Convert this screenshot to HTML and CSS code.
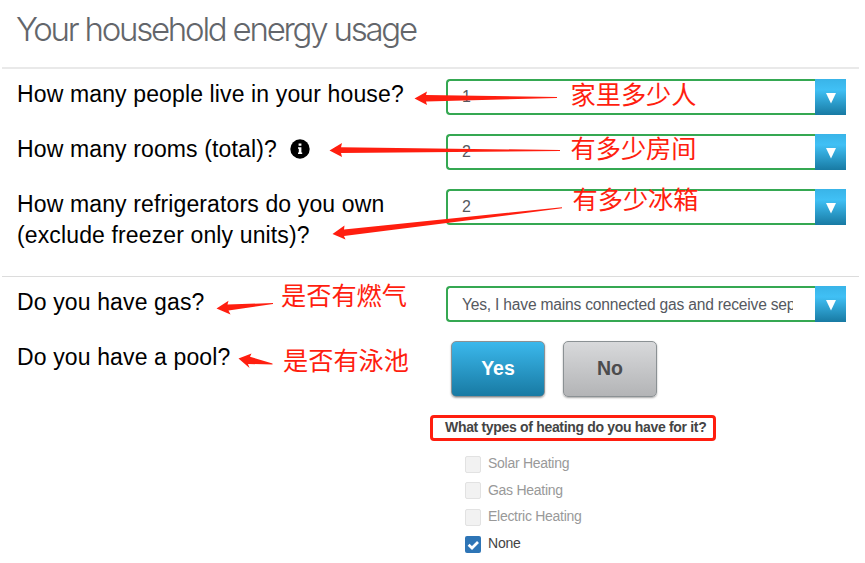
FILE: index.html
```html
<!DOCTYPE html>
<html lang="en">
<head>
<meta charset="utf-8">
<title>Your household energy usage</title>
<link rel="stylesheet" href="styles.css">
</head>
<body>
<main class="page">
  <h1 class="title"><span>Your household energy usage</span></h1>
  <section class="group group-usage">
    <div class="row">
      <div class="question"><span>How many people live in your house?</span></div>
      <div class="select"><span class="value">1</span><span class="arrow"><svg width="10" height="11" viewBox="0 0 10 11"><path d="M0 0H10L5 10.5Z" fill="#fff"/></svg></span></div>
    </div>
    <div class="row">
      <div class="question"><span>How many rooms (total)?</span>
        <svg class="info" width="20" height="20" viewBox="0 0 20 20"><circle cx="10" cy="10" r="9.7" fill="#000"/><path d="M8.600 4.600h2.800v2.200h-2.800zM8 8.300h3.400v5.300h.8v1.400H8v-1.400h.8V9.700H8z" fill="#fff"/></svg>
      </div>
      <div class="select"><span class="value">2</span><span class="arrow"><svg width="10" height="11" viewBox="0 0 10 11"><path d="M0 0H10L5 10.5Z" fill="#fff"/></svg></span></div>
    </div>
    <div class="row">
      <div class="question"><span>How many refrigerators do you own<br>(exclude freezer only units)?</span></div>
      <div class="select"><span class="value">2</span><span class="arrow"><svg width="10" height="11" viewBox="0 0 10 11"><path d="M0 0H10L5 10.5Z" fill="#fff"/></svg></span></div>
    </div>
  </section>
  <section class="group group-supply">
    <div class="row">
      <div class="question"><span>Do you have gas?</span></div>
      <div class="select"><span class="value value-long">Yes, I have mains connected gas and receive separate bills</span><span class="arrow"><svg width="10" height="11" viewBox="0 0 10 11"><path d="M0 0H10L5 10.5Z" fill="#fff"/></svg></span></div>
    </div>
    <div class="row">
      <div class="question"><span>Do you have a pool?</span></div>
      <div class="pool">
        <div class="buttons">
          <button class="btn btn-yes">Yes</button>
          <button class="btn btn-no">No</button>
        </div>
        <div class="heating-title"><span>What types of heating do you have for it?</span></div>
        <ul class="options">
          <li class="option"><i class="box"></i><span>Solar Heating</span></li>
          <li class="option"><i class="box"></i><span>Gas Heating</span></li>
          <li class="option"><i class="box"></i><span>Electric Heating</span></li>
          <li class="option checked"><i class="box"><svg width="16" height="16" viewBox="0 0 16 16"><path d="M3.6 8.8L7 12L13 6" fill="none" stroke="#fff" stroke-width="2.7"/></svg></i><span>None</span></li>
        </ul>
      </div>
    </div>
  </section>

  <svg class="marks" width="865" height="563" viewBox="0 0 865 563" fill="#ff1e0f">
    <path d="M414.500 98.500L427 91.500L426 95L557 97L557 98L426 101.500L427 105Z"/>
    <path d="M329.500 150.500L342 143L341 147.300L560 150L560 151L341 153L342 157Z"/>
    <path d="M332.500 234L344.500 225.500L344 229.500L562 207.300L562 208.300L344 236L345.500 239.500Z"/>
    <path d="M216.500 308.500L228.500 300.800L227.500 304.500L273 303L273 304L228.500 310.500L230.500 314.500Z"/>
    <path d="M238.500 358.500L251.500 353.500L250 356.800L272.500 363.500L272.500 364.500L248 364L249.500 368Z"/>
  </svg>
  <span class="note note-people">家里多少人</span>
  <span class="note note-rooms">有多少房间</span>
  <span class="note note-fridges">有多少冰箱</span>
  <span class="note note-gas">是否有燃气</span>
  <span class="note note-pool">是否有泳池</span>
</main>
</body>
</html>
```
FILE: styles.css
```css
* { box-sizing: border-box; }
body {
  margin: 0;
  background: #fff;
  font-family: "Liberation Sans", Arial, sans-serif;
  color: #000;
}
.page {
  position: relative;
  width: 865px;
  height: 563px;
  overflow: hidden;
}
.title {
  margin: 0;
  height: 67px;
  padding: 8px 0 0 16px;
  font: 300 33px/42px Inter, sans-serif;
  letter-spacing: -2.23px;
  color: #63666b;
  white-space: nowrap;
}
.group {
  margin: 0 6px 0 2px;
  padding-left: 15px;
}
.group-usage {
  height: 209px;
  padding-top: 9.5px;
  border-top: 2px solid #e9e9e9;
}
.group-supply {
  padding-top: 9px;
  border-top: 1px solid #dcdcdc;
}
.row {
  display: flex;
  align-items: flex-start;
  min-height: 55px;
}
.question {
  display: flex;
  align-items: center;
  gap: 13px;
  width: 429px;
  flex: none;
  padding-top: 0.5px;
  font-size: 23px;
  line-height: 30.5px;
  letter-spacing: 0.13px;
  white-space: nowrap;
}
.select {
  display: flex;
  width: 400px;
  height: 36px;
  border: 2px solid #35a852;
  border-right: 0;
  border-radius: 4px 0 0 4px;
}
.value {
  flex: 1;
  margin-left: 14px;
  margin-right: 22px;
  overflow: hidden;
  white-space: nowrap;
  font-size: 16px;
  line-height: 31px;
  color: #55595f;
}
.value-long {
  font-size: 15.6px;
  letter-spacing: -0.2px;
  line-height: 33px;
}
.arrow {
  display: flex;
  align-items: center;
  justify-content: center;
  width: 31px;
  margin: -2px 0;
  padding-top: 3px;
  background: linear-gradient(#39b4e8, #40c0f5 30%, #187aa3);
}
.pool { width: 400px; margin-left: -16px; }
.buttons {
  display: flex;
  gap: 18px;
  padding-left: 21px;
}
.btn {
  width: 94px;
  height: 56px;
  padding: 0 0 1px;
  border: 1px solid #8b9194;
  border-radius: 5px;
  font: bold 19.5px "Liberation Sans", Arial, sans-serif;
  box-shadow: 0 1px 2px rgba(0, 0, 0, .35);
}
.btn-yes { color: #fff; background: linear-gradient(#3bb8ec, #187aa3); }
.btn-no { color: #4c4c4e; background: linear-gradient(#d8d9db, #b3b4b6); }
.heating-title {
  width: 286px;
  height: 26px;
  margin-top: 18px;
  padding-left: 12px;
  border: 3px solid #ff1e0f;
  border-radius: 4px;
  font-size: 14px;
  letter-spacing: -0.32px;
  font-weight: bold;
  line-height: 19px;
  color: #444;
  white-space: nowrap;
}
.options {
  margin: 9px 0 0;
  padding: 0 0 0 35px;
  list-style: none;
}
.option {
  display: flex;
  align-items: center;
  gap: 7px;
  height: 26.6px;
  font-size: 14px;
  letter-spacing: -0.28px;
  line-height: 20px;
  color: #999;
}
.box {
  width: 16px;
  height: 17px;
  margin-top: 2px;
  border: 1px solid #e2e2e2;
  border-radius: 2px;
  background: #f2f2f2;
}
.checked { color: #444; letter-spacing: -0.2px; }
.checked .box { border: 0; background: #2e75b6; }
.box svg { display: block; }
.marks {
  position: absolute;
  left: 0;
  top: 0;
}
.note {
  position: absolute;
  font: 25.2px/36px "Noto Sans CJK SC", sans-serif;
  color: #ff1e0f;
  white-space: nowrap;
}
.note-people { left: 570.5px; top: 75px; }
.note-rooms { left: 570.5px; top: 129px; }
.note-fridges { left: 572.5px; top: 180px; }
.note-gas { left: 281px; top: 276px; }
.note-pool { left: 283px; top: 341px; }
```
